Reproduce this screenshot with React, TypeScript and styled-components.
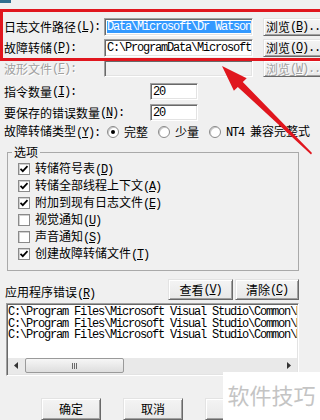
import React from "react";
import styled, { createGlobalStyle } from "styled-components";

const CJK = `"Noto Sans CJK SC", "Liberation Sans", sans-serif`;
const MONO = `"Liberation Mono", "DejaVu Sans Mono", monospace`;

const GlobalStyle = createGlobalStyle`
  html, body { margin: 0; padding: 0; background: #f0f0f0; }
  body { font-family: ${CJK}; font-size: 12px; color: #000; }
  * { box-sizing: border-box; }
`;

const Dialog = styled.div`
  position: relative;
  width: 320px;
  height: 420px;
  overflow: hidden;
  background: #f0f0f0;
  font-family: ${CJK};
  font-size: 12px;
  line-height: 12px;
  padding: 18px 0 0 4px;
  display: flex;
  flex-direction: column;
`;

const PathGrid = styled.div`
  display: grid;
  grid-template-columns: 100px 149px 85px;
  grid-template-rows: 18px 18px 17px;
  row-gap: 3px;
`;

const Label = styled.div<{ $disabled?: boolean }>`
  display: flex;
  align-items: center;
  white-space: nowrap;
  color: ${(p) => (p.$disabled ? "#a0a0a0" : "#000")};
  text-shadow: ${(p) => (p.$disabled ? "1px 1px 0 #fff" : "none")};
`;

const Key = styled.span`
  font-family: ${MONO};
  font-size: 12px;
  letter-spacing: -1.2px;
  u { text-decoration: underline; text-underline-offset: 1px; }
`;

const Edit = styled.div<{ $disabled?: boolean }>`
  display: flex;
  align-items: center;
  height: 100%;
  padding: 0 0 0 2px;
  background: ${(p) => (p.$disabled ? "#f0f0f0" : "#fff")};
  border: 1px solid;
  border-color: #a0a0a0 #fff #fff #a0a0a0;
  box-shadow: inset 1px 1px 0 #696969, inset -1px -1px 0 #e3e3e3;
  font-family: ${MONO};
  font-size: 12px;
  letter-spacing: -1.2px;
  white-space: nowrap;
  overflow: hidden;
`;

const Selected = styled.span`
  background: #3399ff;
  color: #fff;
  line-height: 12px;
`;

const Button = styled.div<{ $start?: boolean; $disabled?: boolean; $w?: number; $ml?: number }>`
  display: flex;
  align-items: center;
  justify-content: ${(p) => (p.$start ? "flex-start" : "center")};
  width: ${(p) => (p.$w ? `${p.$w}px` : "auto")};
  height: 100%;
  margin-left: ${(p) => p.$ml ?? 0}px;
  padding: 0 0 0 ${(p) => (p.$start ? "2px" : "0")};
  background: linear-gradient(#f4f4f4, #e8e8e8);
  border: 1px solid;
  border-color: #e3e3e3 #696969 #696969 #e3e3e3;
  box-shadow: inset 1px 1px 0 #fff, inset -1px -1px 0 #a0a0a0;
  white-space: nowrap;
  color: ${(p) => (p.$disabled ? "#a0a0a0" : "#000")};
  text-shadow: ${(p) => (p.$disabled ? "1px 1px 0 #fff" : "none")};
`;

const NumGrid = styled.div`
  margin-top: 6px;
  display: grid;
  grid-template-columns: 146px 48px;
  grid-template-rows: 17px 17px;
  row-gap: 4px;
`;

const RadioRow = styled.div`
  margin-top: 4px;
  height: 14px;
  display: flex;
  align-items: center;
`;

const RadioLabel = styled.div`
  width: 104px;
  white-space: nowrap;
`;

const RadioItem = styled.div`
  display: flex;
  align-items: center;
  gap: 5px;
  margin-right: 10px;
  white-space: nowrap;
`;

const RadioCircle = styled.span<{ $on?: boolean }>`
  width: 12px;
  height: 12px;
  border-radius: 50%;
  background: #fff;
  border: 1px solid #8a8a8a;
  box-shadow: inset 1px 1px 0 #c8c8c8;
  display: flex;
  align-items: center;
  justify-content: center;
  &::after {
    content: "";
    width: 4px;
    height: 4px;
    border-radius: 50%;
    background: ${(p) => (p.$on ? "#000" : "transparent")};
  }
`;

const Group = styled.fieldset`
  margin: 7px 0 0 3px;
  width: 292px;
  padding: 2px 0 8px 4px;
  border: 1px solid #a9a9a9;
  min-inline-size: 0;
`;

const Legend = styled.legend`
  padding: 0 2px;
  font-size: 12px;
  line-height: 12px;
`;

const CheckList = styled.div`
  display: flex;
  flex-direction: column;
  padding-left: 6px;
`;

const CheckRow = styled.div`
  display: flex;
  align-items: center;
  gap: 5px;
  height: 17px;
  white-space: nowrap;
`;

const CheckBox = styled.span`
  width: 12px;
  height: 12px;
  background: #fff;
  border: 1px solid #8a8a8a;
  box-shadow: inset 1px 1px 0 #d0d0d0;
  display: flex;
  align-items: center;
  justify-content: center;
`;

const ErrRow = styled.div`
  margin-top: 8px;
  width: 295px;
  height: 21px;
  padding-left: 1px;
  display: flex;
  align-items: flex-end;
  justify-content: space-between;
`;

const ErrLabel = styled.div`
  white-space: nowrap;
`;

const ErrButtons = styled.div`
  display: flex;
  gap: 2px;
  height: 21px;
`;

const ListBox = styled.div`
  margin: 3px 0 0 2px;
  width: 293px;
  height: 74px;
  background: #fff;
  border: 1px solid;
  border-color: #a0a0a0 #fff #fff #a0a0a0;
  box-shadow: inset 1px 1px 0 #696969, inset -1px -1px 0 #e3e3e3;
  display: flex;
  flex-direction: column;
  padding: 2px 1px 1px 1px;
`;

const Lines = styled.div`
  flex: 1;
  overflow: hidden;
  font-family: ${MONO};
  font-size: 12px;
  letter-spacing: -1.2px;
  line-height: 11.5px;
  white-space: nowrap;
  padding-top: 1px;
`;

const HScroll = styled.div`
  height: 16px;
  background: #e9e9e9;
  display: flex;
  align-items: center;
`;

const ArrowBtn = styled.div`
  width: 16px;
  height: 16px;
  display: flex;
  align-items: center;
  justify-content: center;
`;

const Thumb = styled.div`
  margin-left: 1px;
  width: 99px;
  height: 15px;
  border: 1px solid #9a9a9a;
  border-radius: 2px;
  background: linear-gradient(#f6f6f6, #dedede);
  display: flex;
  align-items: center;
  justify-content: center;
  gap: 1px;
`;

const Grip = styled.span`
  width: 1px;
  height: 6px;
  background: #6a6a6a;
`;

const Spacer = styled.div`
  flex: 1;
`;

const BottomRow = styled.div`
  margin-top: 22px;
  padding-left: 37px;
  display: flex;
  gap: 22px;
  height: 23px;
`;

const Overlay = styled.svg`
  position: absolute;
  left: 0;
  top: 0;
  pointer-events: none;
`;

const RedBox = styled.div`
  position: absolute;
  left: 0;
  top: 9px;
  width: 330px;
  height: 52px;
  border: 3px solid #e0161e;
  pointer-events: none;
`;

const Corner = styled.div`
  position: absolute;
  left: 0;
  top: 0;
  width: 11px;
  height: 3px;
  background: #2f6f8f;
`;

const Watermark = styled.div`
  position: absolute;
  right: 0;
  bottom: 0;
  width: 97px;
  height: 48px;
  background: #fff;
  color: #c4c4c4;
  font-size: 22px;
  line-height: 22px;
  display: flex;
  align-items: center;
  justify-content: center;
  padding-bottom: 4px;
`;

const Mn = ({ k, colon }: { k: string; colon?: boolean }) => (
  <Key>
    (<u>{k}</u>){colon ? ":" : ""}
  </Key>
);

const Check = () => (
  <svg width="10" height="10" viewBox="0 0 10 10">
    <path d="M1.5 4.8 L3.8 7.2 L8.5 2.2" fill="none" stroke="#000" strokeWidth="1.7" />
  </svg>
);

const LINE = "C:\\Program Files\\Microsoft Visual Studio\\Common\\MSDev98\\Bin\\MSDEV.EXE";

const checks: { t: string; k: string; on: boolean }[] = [
  { t: "转储符号表", k: "D", on: true },
  { t: "转储全部线程上下文", k: "A", on: true },
  { t: "附加到现有日志文件", k: "E", on: true },
  { t: "视觉通知", k: "U", on: false },
  { t: "声音通知", k: "S", on: false },
  { t: "创建故障转储文件", k: "T", on: true },
];

export default function App() {
  return (
    <>
      <GlobalStyle />
      <Dialog>
        <PathGrid>
          <Label>
            日志文件路径<Mn k="L" colon />
          </Label>
          <Edit>
            <Selected>Data\Microsoft\Dr Watson</Selected>
          </Edit>
          <Button $start $w={75} $ml={10}>
            浏览<Key>(<u>B</u>)...</Key>
          </Button>
          <Label>
            故障转储<Mn k="P" colon />
          </Label>
          <Edit>C:\ProgramData\Microsoft</Edit>
          <Button $start $w={75} $ml={10}>
            浏览<Key>(<u>O</u>)...</Key>
          </Button>
          <Label $disabled>
            波形文件<Mn k="F" colon />
          </Label>
          <Edit $disabled />
          <Button $start $disabled $w={75} $ml={10}>
            浏览<Key>(<u>W</u>)...</Key>
          </Button>
        </PathGrid>

        <NumGrid>
          <Label>
            指令数量<Mn k="I" colon />
          </Label>
          <Edit>20</Edit>
          <Label>
            要保存的错误数量<Mn k="N" colon />
          </Label>
          <Edit>20</Edit>
        </NumGrid>

        <RadioRow>
          <RadioLabel>
            故障转储类型<Mn k="Y" colon />
          </RadioLabel>
          <RadioItem>
            <RadioCircle $on />
            完整
          </RadioItem>
          <RadioItem>
            <RadioCircle />
            少量
          </RadioItem>
          <RadioItem>
            <RadioCircle />
            <span>
              <Key>NT4 </Key>兼容完整式
            </span>
          </RadioItem>
        </RadioRow>

        <Group>
          <Legend>选项</Legend>
          <CheckList>
            {checks.map((c) => (
              <CheckRow key={c.k}>
                <CheckBox>{c.on ? <Check /> : null}</CheckBox>
                <span>
                  {c.t}
                  <Mn k={c.k} />
                </span>
              </CheckRow>
            ))}
          </CheckList>
        </Group>

        <ErrRow>
          <ErrLabel>
            应用程序错误<Mn k="R" />
          </ErrLabel>
          <ErrButtons>
            <Button $w={65}>
              查看<Mn k="V" />
            </Button>
            <Button $w={64}>
              清除<Mn k="C" />
            </Button>
          </ErrButtons>
        </ErrRow>

        <ListBox>
          <Lines>
            <div>{LINE}</div>
            <div>{LINE}</div>
            <div>{LINE}</div>
          </Lines>
          <HScroll>
            <ArrowBtn>
              <svg width="4" height="7" viewBox="0 0 4 7">
                <path d="M4 0 L0 3.5 L4 7 Z" fill="#333" />
              </svg>
            </ArrowBtn>
            <Thumb>
              <Grip />
              <Grip />
              <Grip />
            </Thumb>
            <Spacer />
            <ArrowBtn>
              <svg width="4" height="7" viewBox="0 0 4 7">
                <path d="M0 0 L4 3.5 L0 7 Z" fill="#333" />
              </svg>
            </ArrowBtn>
          </HScroll>
        </ListBox>

        <BottomRow>
          <Button $w={60}>确定</Button>
          <Button $w={60}>取消</Button>
          <Button $w={60}>帮助</Button>
        </BottomRow>

        <Corner />
        <RedBox />
        <Overlay width="320" height="420" viewBox="0 0 320 420">
          <polygon
            points="222,66 246.7,78.2 242.8,82 312,153 311,154.5 237.8,87 233.9,90.8"
            fill="#e0161e"
          />
        </Overlay>
        <Watermark>软件技巧</Watermark>
      </Dialog>
    </>
  );
}
